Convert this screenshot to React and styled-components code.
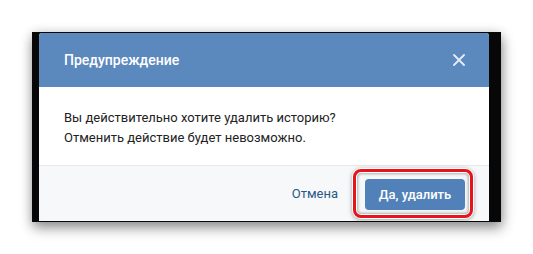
import React from "react";
import styled, { createGlobalStyle } from "styled-components";

const Global = createGlobalStyle`
  html, body { margin: 0; padding: 0; background: #ffffff; }
  body { font-family: Roboto, "Open Sans", "Liberation Sans", sans-serif; }
`;

const Page = styled.div`
  width: 533px;
  height: 254px;
  padding: 32px 0 0 32px;
  box-sizing: border-box;
`;

const Frame = styled.div`
  width: 469px;
  height: 190px;
  box-sizing: border-box;
  background: #070707;
  padding: 1px 12px 1px 7px;
  box-shadow: 1px 6px 12px rgba(0, 0, 0, 0.42), 0 0 10px rgba(0, 0, 0, 0.12);
  display: flex;
`;

const Dialog = styled.div`
  flex: 1;
  display: flex;
  flex-direction: column;
  background: #fff;
  border-radius: 3px 3px 0 0;
  overflow: hidden;
`;

const Header = styled.div`
  height: 54px;
  background: #5b88bd;
  display: flex;
  align-items: center;
  justify-content: space-between;
  padding: 0 24px 0 25px;
`;

const Title = styled.div`
  color: #fff;
  font-size: 14px;
  font-weight: 500;
`;

const Close = styled.svg`
  width: 12px;
  height: 12px;
  display: block;
`;

const Body = styled.div`
  flex: 1;
  padding: 21px 25px 0;
  font-size: 13px;
  line-height: 20px;
  color: #222;
  border-bottom: 1px solid #e7e8ec;
`;

const Footer = styled.div`
  height: 55px;
  background: #f7f8fa;
  display: flex;
  align-items: center;
  justify-content: flex-end;
  padding-right: 16px;
  gap: 15px;
`;

const LinkButton = styled.span`
  color: #2a5885;
  font-size: 13px;
`;

const Highlight = styled.div`
  border: 3px solid #e8141b;
  border-radius: 8px;
  padding: 7px 5px 5px 9px;
  box-shadow: inset 0 0 0 1px #fff, inset 0 0 3px 2px rgba(0, 0, 0, 0.3),
    0 0 0 1px #fff, 0 1px 4px 1px rgba(0, 0, 0, 0.35);
  display: flex;
`;

const Primary = styled.button`
  width: 100px;
  height: 31px;
  border: none;
  border-radius: 4px;
  background: #5181b8;
  color: #fff;
  font-family: inherit;
  font-size: 13px;
  font-weight: 500;
  padding: 0;
`;

export default function App() {
  return (
    <>
      <Global />
      <Page>
        <Frame>
          <Dialog>
            <Header>
              <Title>Предупреждение</Title>
              <Close viewBox="0 0 12 12">
                <path d="M1 1 L11 11 M11 1 L1 11" stroke="#e6ecf4" strokeWidth="1.8" strokeLinecap="round" />
              </Close>
            </Header>
            <Body>
              Вы действительно хотите удалить историю?
              <br />
              Отменить действие будет невозможно.
            </Body>
            <Footer>
              <LinkButton>Отмена</LinkButton>
              <Highlight>
                <Primary>Да, удалить</Primary>
              </Highlight>
            </Footer>
          </Dialog>
        </Frame>
      </Page>
    </>
  );
}
